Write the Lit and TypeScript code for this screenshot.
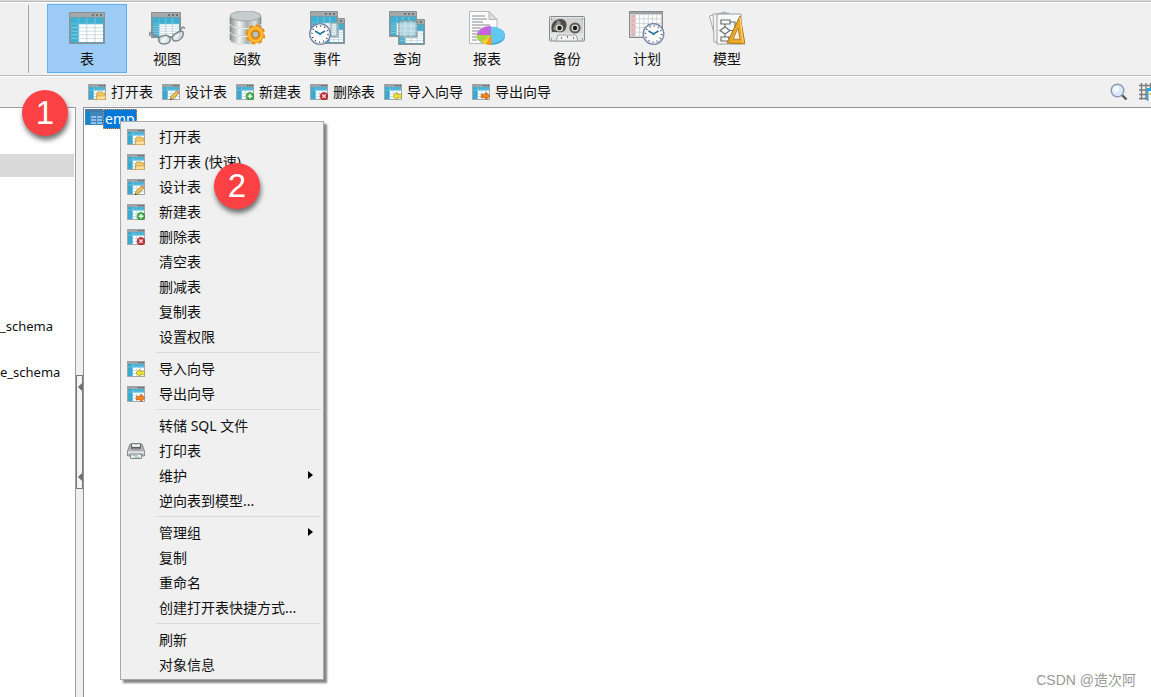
import { LitElement, html, svg, css, nothing } from "lit";
import { customElement, property, state } from "lit/decorators.js";

type Entry = { label: string; icon?: string; sub?: boolean } | null;

const windowSmall = svg`
  <rect x="0" y="0" width="18" height="16" fill="#a3a8aa"/>
  <rect x="0" y="0" width="18" height="3" fill="#a0a3a5"/>
  <path d="M11 1h1.4v1.3H11zM13.3 1h1.4v1.3h-1.4zM15.6 1H17v1.3h-1.4z" fill="#5c6366"/>
  <rect x="1" y="3" width="16" height="12" fill="#49b4d7"/>
  <path d="M1 3h4v12H1z" fill="#3aa9d0"/>
  <path d="M6 6.500h11V15H6z" fill="#fff"/>
  <path d="M9.500 6.500V15M13.300 6.500V15M6 9.500h11M6 12.500h11" stroke="#c9d8e0" stroke-width=".8"/>
  <path d="M1 6h16M5.500 3v12" stroke="#79c8e2" stroke-width=".7"/>`;

const overlays: Record<string, unknown> = {
  open: svg`<path d="M8.5 9.5 10 8h4l1 1h2v2l1 .6-1 4.400H8z" fill="#efc66c" stroke="#bd8d32" stroke-width=".7"/><path d="M9 12h9l-1 3.600H8.600z" fill="#fbe2a0" stroke="#c99b42" stroke-width=".6"/>`,
  design: svg`<path d="m8 16 1-3.600 6-6 2.400 2.300-6 6z" fill="#e8c34a" stroke="#8c7438" stroke-width=".7"/><path d="m14 7.400 1.400-1.300 2.200 2.200-1.300 1.300z" fill="#d88c86"/><path d="m8 16 .5-1.800 1.300 1.300z" fill="#333"/>`,
  add: svg`<circle cx="14" cy="12.2" r="3.8" fill="#35ae42" stroke="#1c8531" stroke-width=".6"/><path d="M14 9.800v4.800M11.600 12.200h4.800" stroke="#fff" stroke-width="1.4"/>`,
  remove: svg`<circle cx="14" cy="12.2" r="3.8" fill="#c83236" stroke="#951c24" stroke-width=".6"/><path d="m12.300 10.500 3.400 3.400m0-3.400-3.400 3.400" stroke="#f6dede" stroke-width="1.3"/>`,
  import: svg`<path d="m9 12 4-4v2.400h4.600v3.300H13V16z" fill="#f2e22c" stroke="#a79a1c" stroke-width=".7"/>`,
  export: svg`<path d="m17.800 12-4-4v2.400H9.200v3.300h4.600V16z" fill="#f5841f" stroke="#b65510" stroke-width=".7"/>`,
};

const printer = svg`
  <path d="M3 1h12l2.500 7v5H.5V8z" fill="#b4b7b9" stroke="#77797b" stroke-width=".8"/>
  <path d="M1 8.500h16v2H1z" fill="#e9eaeb"/>
  <path d="M4.500.8h9v5h-9z" fill="#fff" stroke="#55585a" stroke-width=".9"/>
  <path d="M4.600 4.500h8.800" stroke="#5c5f61" stroke-width="1.4"/>
  <path d="M3.600 11h10.800v4.500H3.600z" fill="#f6f6f6" stroke="#747779" stroke-width=".9"/>
  <path d="M5.500 12.700h5M7.500 14.200h5" stroke="#6aa29c" stroke-width=".8"/>`;

const smallIcon = (name: string) => html`<svg class="small" viewBox="0 0 18 16" aria-hidden="true">
  ${name === "print" ? printer : svg`${windowSmall}${overlays[name]}`}
</svg>`;

/* A titled window with a data grid, drawn in a w x h box at x, y. */
const grid = (x: number, y: number, w: number, h: number) => {
  const left = x + w * 0.27;
  const top = y + 12;
  const cols = [1, 2].map((i) => left + ((x + w - 2 - left) / 3) * i);
  const rows = [1, 2, 3, 4].map((i) => top + ((y + h - 2 - top) / 5) * i);
  return svg`
    <rect x=${x} y=${y} width=${w} height=${h} rx="1" fill="#8c9192"/>
    <rect x=${x + 1} y=${y + 1} width=${w - 2} height="4" fill="#a5a8a9"/>
    <path d="M${x + w - 13} ${y + 3}h2m2 0h2m2 0h2" stroke="#5b6062" stroke-width="1.6"/>
    <rect x=${x + 1.5} y=${y + 5.5} width=${w - 3} height=${h - 7} fill="#3fb0d4"/>
    <rect x=${left} y=${top} width=${x + w - 2 - left} height=${y + h - 2 - top} fill="#fff"/>
    ${cols.map((c) => svg`<path d="M${c} ${y + 6}V${y + h - 2}" stroke="#b8c6cc" stroke-width=".7"/>`)}
    ${rows.map((r) => svg`<path d="M${x + 2} ${r}H${x + w - 2}" stroke="#b8cdd5" stroke-width=".7"/>`)}
    <path d="M${x + 2} ${top}H${x + w - 2}M${left} ${y + 6}V${y + h - 2}" stroke="#72c6df" stroke-width=".7"/>`;
};

const clock = (cx: number, cy: number) => svg`
  <circle cx=${cx} cy=${cy} r="10.2" fill="#fdfdfd" stroke="#7483a3" stroke-width="1.5"/>
  <circle cx=${cx} cy=${cy} r="9.2" fill="none" stroke="#dbe2ec"/>
  <circle cx=${cx} cy=${cy} r="8" fill="none" stroke="#39414e" stroke-width="1.6" stroke-dasharray=".9 3.29"/>
  <path d="M${cx - 5} ${cy - 3}L${cx} ${cy}l5-3" fill="none" stroke="#23708c" stroke-width="1.5"/>
  <circle cx=${cx} cy=${cy} r="1.2" fill="#2b8aa6"/>`;

const cylinder = (y: number) => svg`
  <path d="M1 ${y}v7c0 6 31 6 31 0v-7z" fill="url(#metal)" stroke="#7c8585" stroke-width=".6"/>
  <path d="M1 ${y + 7}c0 6 31 6 31 0" fill="none" stroke="#f2f4f4" stroke-width="1"/>`;

const large: Record<string, unknown> = {
  table: grid(0, 1, 36, 32),
  view: svg`${grid(2, 1, 30, 26)}
    <path d="M1 25c-1-4 1-5 3-2l8 6M35 18c1-2-1-3-3 0l-5 7" fill="none" stroke="#82898b" stroke-width="1.5"/>
    <path d="M10 27c2-3 9-4 11 0 1 4-2 6-6 6s-6-2-5-6zM23 26c2-4 10-7 11-5 1 5-3 9-7 9-3 0-4-2-4-4z" fill="#dce8e9" fill-opacity=".85" stroke="#7f888a" stroke-width="1.5"/>
    <path d="m13 31 4-5m9 1 4-4" stroke="#fff" stroke-width="1.6"/>`,
  func: svg`
    <defs><linearGradient id="metal"><stop offset="0" stop-color="#868f8f"/><stop offset=".3" stop-color="#f3f6f5"/><stop offset=".55" stop-color="#a9b2b2"/><stop offset=".8" stop-color="#dde2e1"/><stop offset="1" stop-color="#858d8d"/></linearGradient></defs>
    ${cylinder(22)}${cylinder(14)}${cylinder(6)}
    <ellipse cx="16.5" cy="5" rx="15.5" ry="5" fill="#c6cdcc" stroke="#8b9494" stroke-width=".7"/>
    <circle cx="26.5" cy="23.5" r="8.700" fill="none" stroke="#f08f14" stroke-width="2.600" stroke-dasharray="3.900 2.930"/>
    <circle cx="26.5" cy="23.5" r="5.900" fill="none" stroke="#f79a1a" stroke-width="5"/>
    <circle cx="26.5" cy="23.5" r="6.500" fill="none" stroke="#fdc83b" stroke-width="1.600"/>
    <circle cx="26.5" cy="23.5" r="3.500" fill="#b9c1c4" stroke="#c0700f"/>`,
  event: svg`${grid(15, 7, 21, 26)}${grid(1, 0, 28, 26)}<path d="M22 12h7v14h-7z" fill="#cddfe4" fill-opacity=".6" stroke="#92a4aa"/>${clock(11, 23)}`,
  query: svg`${grid(9, 8, 27, 26)}${grid(0, 0, 28, 26)}<path d="M10 10h18v16H10z" fill="#a5cfdb" fill-opacity=".75" stroke="#819094"/><path d="M10 15h18M10 20h18M16 10v16M22 10v16" stroke="#c9e4ec"/>`,
  report: svg`
    <path d="M.5.5H20l8 8v24H.5z" fill="#fbfbfb" stroke="#b5b8ba"/><path d="M20 .5v8h8z" fill="#ddd" stroke="#b5b8ba"/>
    <path d="M3 5h13M3 8h15M3 11h11M3 14h18M3 17h9M3 20h7M3 23h5M3 26h6M3 29h5" stroke="#85898c"/>
    <ellipse cx="22" cy="25" rx="14" ry="9" fill="#2f9fd6"/>
    <ellipse cx="22" cy="24" rx="14" ry="8.500" fill="#62c8f1"/>
    <path d="M22 24H8c1-6 7-9 14-9z" fill="#c764d9"/>
    <path d="m22 24-9 7c-5-2-6-4-5-7z" fill="#a6d63c"/><path d="m22 24-10 7c3 2 5 3 8 3z" fill="#f8cd2d"/>
    <path d="m22 24-5 9 6 .800z" fill="#f39820"/>`,
  backup: svg`
    <rect x=".5" y="5.500" width="35" height="24.500" rx="1" fill="#e4e5e5" stroke="#85898a"/>
    <rect x="2" y="7" width="32" height="15" fill="#cfd1d1"/>
    <path d="M3 21C1 13 5 8 12 8c4 0 7 4 5 9-1 4-5 5-8 4z" fill="#514d49"/><path d="m4 18 5-9 3 3-5 8z" fill="#98928a"/>
    <circle cx="26" cy="17" r="5.600" fill="#5c5956"/><circle cx="26" cy="17" r="3.600" fill="#dedede"/><circle cx="26" cy="17" r="2.200" fill="#171717"/>
    <circle cx="10.500" cy="17" r="3.600" fill="#deded9"/><circle cx="10.500" cy="17" r="2.200" fill="#171717"/>
    <path d="m7 30 2-6h18l2 6z" fill="#f1f1f1" stroke="#a2a5a5"/><path d="M12 27h1m5-1h1m5 1h1" stroke="#555" stroke-width="1.500"/>
    <path d="M2 8h1m30 0h1M2 28h1m30 0h1" stroke="#4c4c4c"/>`,
  plan: svg`
    <rect x=".5" y=".5" width="33" height="26" fill="#d0d3d5" stroke="#84898c"/><rect x="1" y="1" width="32" height="2" fill="#9ca1a5"/>
    ${[0, 1, 2, 3, 4].map((r) => [0, 1, 2, 3, 4, 5, 6].map((c) => svg`<rect x=${2.5 + c * 4.3} y=${4 + r * 4.4} width="3.3" height="3.4" fill=${c ? "#fff" : "#efabad"}/>`))}
    ${clock(24.5, 23)}`,
  model: svg`
    <path d="m.5 5 16-4 8 26-17 5z" fill="#fafafa" stroke="#a6aaac"/>
    <path d="m4 3 16-1v29H5z" fill="#f2f2f2" stroke="#a6aaac"/>
    <path d="M8 3h24v30H8z" fill="#f7f8f8" stroke="#9a9fa1"/>
    <path d="M12 9h9v4h-9zM12 26h8v4h-8zM16 13v3m0 7v3M16 16l5 3.500-5 3.500-5-3.500zM21 11h5v8.500h-5" fill="none" stroke="#696e71" stroke-width="1.200"/>
    <path d="M31 5 18 32l18 1z" fill="#e9a92b" stroke="#aa7419"/><path d="m29 17-5 11 7 .5z" fill="#f3f0e9" stroke="#bc8427"/>
    <path d="m31 6 3 25" stroke="#fad77a" stroke-width="1.200"/>`,
};

const mainTools = [
  ["table", "表"], ["view", "视图"], ["func", "函数"], ["event", "事件"], ["query", "查询"],
  ["report", "报表"], ["backup", "备份"], ["plan", "计划"], ["model", "模型"],
];

const actions = [
  ["open", "打开表"], ["design", "设计表"], ["add", "新建表"],
  ["remove", "删除表"], ["import", "导入向导"], ["export", "导出向导"],
];

const menu: Entry[] = [
  { label: "打开表", icon: "open" },
  { label: "打开表 (快速)", icon: "open" },
  { label: "设计表", icon: "design" },
  { label: "新建表", icon: "add" },
  { label: "删除表", icon: "remove" },
  { label: "清空表" },
  { label: "删减表" },
  { label: "复制表" },
  { label: "设置权限" },
  null,
  { label: "导入向导", icon: "import" },
  { label: "导出向导", icon: "export" },
  null,
  { label: "转储 SQL 文件" },
  { label: "打印表", icon: "print" },
  { label: "维护", sub: true },
  { label: "逆向表到模型..." },
  null,
  { label: "管理组", sub: true },
  { label: "复制" },
  { label: "重命名" },
  { label: "创建打开表快捷方式..." },
  null,
  { label: "刷新" },
  { label: "对象信息" },
];

const control = css`
  * { box-sizing: border-box; }
  button {
    font: inherit;
    color: inherit;
    background: none;
    border: 0;
    padding: 0;
    text-align: left;
    white-space: nowrap;
  }
  svg { display: block; flex: none; }
  .small { width: 18px; height: 16px; }
`;

@customElement("context-menu")
export class ContextMenu extends LitElement {
  @property({ attribute: false }) entries: Entry[] = [];

  static styles = [control, css`
    :host { display: block; }
    .menu {
      width: 204px;
      padding: 2px;
      background: #f0f0f0;
      border: 1px solid #a9a9a9;
      box-shadow: 3px 3px 2px #858585;
    }
    .item {
      display: grid;
      grid-template-columns: 18px 1fr 8px;
      column-gap: 14px;
      align-items: center;
      width: 100%;
      height: 25px;
      padding: 0 6px 0 4px;
    }
    .item:hover { background: #91c9f7; }
    .label { grid-column: 2; }
    .arrow { width: 8px; height: 10px; }
    .line {
      height: 1px;
      margin: 3px 0 3px 33px;
      background: #dadada;
    }
  `];

  render() {
    return html`<div class="menu" role="menu">
      ${this.entries.map((e) => e
        ? html`<button class="item" role="menuitem">
            ${e.icon ? smallIcon(e.icon) : nothing}
            <span class="label">${e.label}</span>
            ${e.sub ? html`<svg class="arrow" viewBox="0 0 8 10" aria-hidden="true"><path d="M1 0l5 4-5 4z"/></svg>` : nothing}
          </button>`
        : html`<div class="line" role="separator"></div>`)}
    </div>`;
  }
}

@customElement("app-root")
export class AppRoot extends LitElement {
  @state() private active = "table";

  static styles = [control, css`
    :host {
      display: flex;
      flex-direction: column;
      position: relative;
      height: 100vh;
      overflow: hidden;
      background: #f0f0f0;
      color: #111;
      font: 14px/20px "Noto Sans", "Noto Sans CJK SC", sans-serif;
    }
    .ribbon {
      display: flex;
      padding: 3px 0 2px 28px;
      border-top: 1px solid #d9d9d9;
      border-bottom: 1px solid #b9b9b9;
      box-shadow: inset 0 1px #b9b9b9, inset 0 2px #fff;
    }
    .rule { width: 1px; margin: 1px 18px 0 0; background: #a6a6a6; }
    .tool {
      display: flex;
      flex-direction: column;
      align-items: center;
      gap: 4px;
      width: 80px;
      height: 69px;
      padding: 6px 0 0;
      border: 1px solid transparent;
    }
    .tool.active { background: #9ccbf5; border-color: #5cb1f6; }
    .large { width: 36px; height: 34px; }
    .actions {
      display: flex;
      align-items: center;
      height: 31px;
      padding-left: 88px;
      gap: 9px;
      border-top: 1px solid #fff;
      overflow: hidden;
    }
    .action { display: flex; align-items: center; gap: 5px; flex: none; }
    .spring { flex: 1; }
    .find, .columns { flex: none; }
    .find svg { width: 18px; height: 18px; }
    .columns { width: 12px; margin-left: 2px; overflow: hidden; }
    .columns svg { width: 18px; height: 18px; }
    .body { display: grid; grid-template-columns: 76px 7px 1fr; flex: 1; min-height: 0; }
    .tree {
      margin: 0;
      padding: 46px 1px 0 0;
      list-style: none;
      font-size: 13px;
      line-height: 22px;
      background: #fff;
      border-top: 1px solid #9c9ea6;
      border-right: 1px solid #9c9ea6;
    }
    .node { height: 23px; }
    .node.selected { background: #d9d9d9; }
    .splitter { display: flex; align-items: center; padding-top: 60px; }
    .grip {
      display: flex;
      flex-direction: column;
      justify-content: space-between;
      align-items: center;
      width: 7px;
      height: 114px;
      padding: 7px 0;
      background: #f4f4f4;
      border: 1px solid #77797e;
    }
    .grip svg { width: 4px; height: 8px; }
    .objects {
      position: relative;
      background: #fff;
      border-top: 1px solid #8f929a;
      border-left: 1px solid #8f929a;
    }
    .object { display: flex; align-items: flex-start; padding: 1px; }
    .object svg { width: 18px; height: 16px; }
    .name {
      height: 20px;
      padding: 0 1px;
      color: #fff;
      background: #0078d7;
      border: 1px dotted #f09038;
      line-height: 18px;
    }
    .popup { position: absolute; left: 36px; top: 13px; }
    .badge {
      position: absolute;
      width: 46px;
      height: 46px;
      border-radius: 50%;
      background: #fc4144;
      box-shadow: 1px 4px 5px rgba(0, 0, 0, 0.55);
      color: #fff;
      font: 33px/46px "Liberation Sans", Arial, sans-serif;
      text-align: center;
    }
    .first { left: 22px; top: 90px; }
    .second { left: 214px; top: 163px; }
    .credit {
      position: absolute;
      right: 15px;
      bottom: 7px;
      color: #999;
      font-family: "Liberation Sans", "Noto Sans CJK SC", sans-serif;
    }
  `];

  render() {
    const nodes = ["", "", "", "", "", "", "", "_schema", "", "e_schema"];
    return html`
      <nav class="ribbon">
        <div class="rule"></div>
        ${mainTools.map(([id, label]) => html`
          <button class="tool ${this.active === id ? "active" : ""}" @click=${() => (this.active = id)}>
            <svg class="large" viewBox="0 0 36 34" aria-hidden="true">${large[id]}</svg>
            <span>${label}</span>
          </button>`)}
      </nav>
      <div class="actions" role="toolbar">
        ${actions.map(([id, label]) => html`<button class="action">${smallIcon(id)}<span>${label}</span></button>`)}
        <div class="spring"></div>
        <button class="find" aria-label="搜索">
          <svg viewBox="0 0 18 18"><path d="m12 12 4.500 4.500" stroke="#555" stroke-width="2.400"/><circle cx="7.500" cy="7.500" r="6.300" fill="#dceafa" stroke="#8c9bb0" stroke-width="1.500"/><circle cx="6" cy="6" r="3" fill="#f6faff"/></svg>
        </button>
        <button class="columns" aria-label="列">
          <svg viewBox="0 0 18 18"><path d="M2.500 0v17M7 0v17M11.500 0v17M0 2.500h18M0 7h18M0 11.500h18M0 15.500h18" stroke="#7c7c7c" stroke-width="1.400"/><path d="M8 5h10v13H8z" fill="#fff"/><path d="M8 5h10v3H8zM8 5h1.500v13H8z" fill="#25a9dc"/><path d="M10.500 10h5v2h-5z" fill="#f4b52a"/></svg>
        </button>
      </div>
      <main class="body">
        <ul class="tree">
          ${nodes.map((n, i) => html`<li class="node ${i === 0 ? "selected" : ""}">${n}</li>`)}
        </ul>
        <div class="splitter">
          <div class="grip">
            <svg viewBox="0 0 4 8"><path d="M4 0v8L0 4z" fill="#6f6f6f"/></svg>
            <svg viewBox="0 0 4 8"><path d="M4 0v8L0 4z" fill="#6f6f6f"/></svg>
          </div>
        </div>
        <section class="objects">
          <div class="object">
            <svg viewBox="0 0 18 16" aria-hidden="true"><path d="M0 0h18v16H0z" fill="#3f86bd"/><path d="M0 0h18v3H0z" fill="#4a7ba7"/><path d="M1 3h4v12H1z" fill="#1688cb"/><path d="M6 7h5v2H6zm6 0h5v2h-5zM6 10h5v2H6zm6 0h5v2h-5zM6 13h5v2H6zm6 0h5v2h-5z" fill="#8fc0eb"/></svg>
            <span class="name">emp</span>
          </div>
          <context-menu class="popup" .entries=${menu}></context-menu>
        </section>
      </main>
      <div class="badge first">1</div>
      <div class="badge second">2</div>
      <div class="credit">CSDN @造次阿</div>
    `;
  }
}
